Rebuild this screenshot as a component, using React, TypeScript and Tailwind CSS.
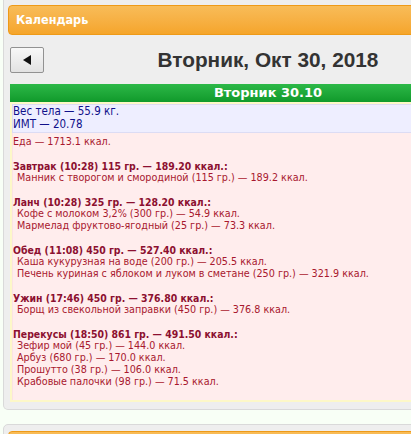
import React from 'react'

const food = [
  { head: 'Завтрак (10:28) 115 гр. — 189.20 ккал.:', items: ['Манник с творогом и смородиной (115 гр.) — 189.2 ккал.'] },
  {
    head: 'Ланч (10:28) 325 гр. — 128.20 ккал.:',
    items: ['Кофе с молоком 3,2% (300 гр.) — 54.9 ккал.', 'Мармелад фруктово-ягодный (25 гр.) — 73.3 ккал.'],
  },
  {
    head: 'Обед (11:08) 450 гр. — 527.40 ккал.:',
    items: ['Каша кукурузная на воде (200 гр.) — 205.5 ккал.', 'Печень куриная с яблоком и луком в сметане (250 гр.) — 321.9 ккал.'],
  },
  { head: 'Ужин (17:46) 450 гр. — 376.80 ккал.:', items: ['Борщ из свекольной заправки (450 гр.) — 376.8 ккал.'] },
  {
    head: 'Перекусы (18:50) 861 гр. — 491.50 ккал.:',
    items: [
      'Зефир мой (45 гр.) — 144.0 ккал.',
      'Арбуз (680 гр.) — 170.0 ккал.',
      'Прошутто (38 гр.) — 106.0 ккал.',
      'Крабовые палочки (98 гр.) — 71.5 ккал.',
    ],
  },
]

export default function App() {
  return (
    <div className="w-[411px] h-[434px] overflow-hidden bg-[#f8fff6]">
      {/* calendar panel */}
      <div className="ml-[3px] w-[530px] border border-t-0 border-[#d9d9d9] rounded-b-[5px] bg-[#eeeeee] px-[4px] pt-[5px] pb-[7px]">
        <div className="h-[30px] flex items-center pl-[7px] rounded-[4px] border border-[#ee9a18] bg-gradient-to-b from-[#f8bc58] to-[#f5a52a] text-white font-bold text-[12.5px] [font-family:'DejaVu_Sans_Condensed','DejaVu_Sans',sans-serif]">
          Календарь
        </div>

        <div className="px-[2px]">
          <div className="mt-[9px] grid grid-cols-[34px_1fr_34px] items-center h-[26px]">
            <button className="h-[26px] w-[34px] flex items-center justify-center rounded-[2px] border border-[#929292] bg-gradient-to-b from-[#f8f8f8] to-[#e2e2e2]">
              <svg width="9" height="10" viewBox="0 0 9 10">
                <polygon points="8,0 8,10 0,5" fill="#111" />
              </svg>
            </button>
            <div className="text-center text-[20.8px] font-bold text-[#333333] [font-family:'Liberation_Sans',Arial,sans-serif]">
              Вторник, Окт 30, 2018
            </div>
            <div />
          </div>

          <div className="mt-[14px] h-[18px] flex items-center justify-center bg-gradient-to-b from-[#2cb847] to-[#0f9a2b] text-white font-bold text-[13px] [font-family:'DejaVu_Sans',sans-serif]">
            Вторник 30.10
          </div>

          <div className="border-2 border-[#fdf8c8] [font-family:'DejaVu_Sans_Condensed','DejaVu_Sans',sans-serif] text-[10.7px] leading-[12px]">
            <div className="bg-[#eeeeff] border border-[#dcdcf4] pb-[1px] text-[#10108a] text-[11.5px] leading-[13px]">
              <div>Вес тела — 55.9 кг.</div>
              <div>ИМТ — 20.78</div>
            </div>
            <div className="bg-[#ffeded] border-x border-[#fbe3e3] pt-[3px] pb-[12px] text-[#a8182e]">
              <div>Еда — 1713.1 ккал.</div>
              {food.map((meal) => (
                <div key={meal.head}>
                  <div className="h-[12px]" />
                  <div className="font-bold text-[#8c1030] text-[10.4px]">{meal.head}</div>
                  {meal.items.map((it) => (
                    <div key={it} className="pl-[4px]">{it}</div>
                  ))}
                </div>
              ))}
            </div>
          </div>
        </div>
      </div>

      {/* next panel */}
      <div className="mt-[14px] ml-[3px] w-[530px] border border-[#d9d9d9] rounded-t-[5px] bg-[#eeeeee] px-[4px] pt-[6px]">
        <div className="h-[30px] rounded-[4px] border border-[#ee9a18] bg-gradient-to-b from-[#f8bc58] to-[#f5a52a]" />
      </div>
    </div>
  )
}
